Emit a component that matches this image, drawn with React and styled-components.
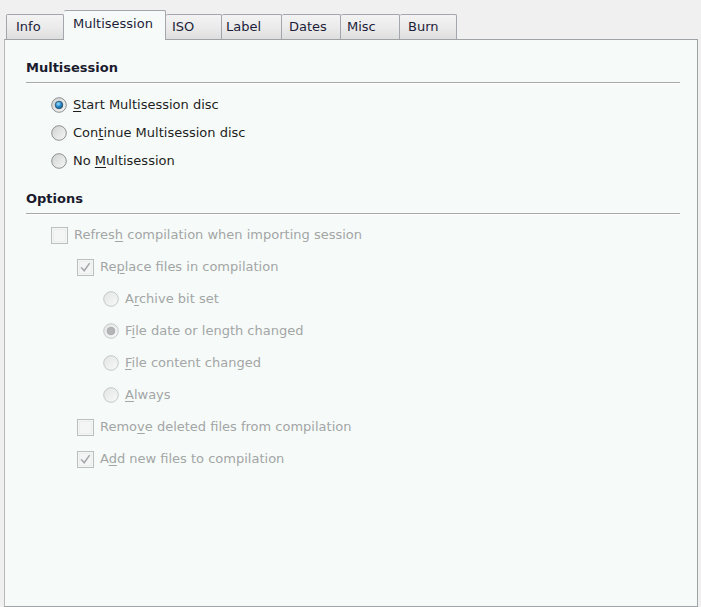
import React from 'react';
import styled, { createGlobalStyle } from 'styled-components';

const GlobalStyle = createGlobalStyle`
  html, body {
    margin: 0;
    padding: 0;
    background: #f0f0f0;
  }
  body {
    font-family: "DejaVu Sans", "Liberation Sans", sans-serif;
    font-size: 13px;
    color: #1e1e1e;
  }
`;

const Frame = styled.div`
  width: 701px;
  height: 607px;
  display: flex;
  flex-direction: column;
  box-sizing: border-box;
`;

const TabStrip = styled.div`
  height: 39px;
  display: flex;
  align-items: flex-end;
  padding-left: 6px;
`;

const Tab = styled.div`
  position: relative;
  box-sizing: border-box;
  width: ${(p) => p.$w}px;
  height: ${(p) => (p.$active ? 30 : 25)}px;
  margin-bottom: ${(p) => (p.$active ? -1 : 0)}px;
  padding-left: ${(p) => p.$pad}px;
  padding-top: ${(p) => (p.$active ? 5 : 4)}px;
  border: 1px solid #a3a6ab;
  border-bottom: none;
  border-left-width: ${(p) => (p.$first || p.$active ? 1 : 0)}px;
  border-radius: 2px 2px 0 0;
  background: ${(p) =>
    p.$active ? '#f6fbf9' : 'linear-gradient(#f3f3f3, #ebebeb 50%, #dedede)'};
  z-index: ${(p) => (p.$active ? 2 : 1)};
  color: #1e1e3a;
  white-space: nowrap;
  line-height: 16px;
  & + & {
    border-left-width: ${(p) => (p.$active ? 1 : 0)}px;
  }
`;

const Panel = styled.div`
  position: relative;
  z-index: 1;
  margin-left: 4px;
  width: 694px;
  height: 568px;
  box-sizing: border-box;
  border: 1px solid #a0a3a6;
  border-left-color: #b8b8b8;
  background: #f6fbf9;
  padding: 20px 17px 0 21px;
  display: flex;
  flex-direction: column;
`;

const SectionTitle = styled.div`
  font-weight: bold;
  font-size: 13px;
  line-height: 16px;
  color: #1a1a2e;
  padding-bottom: 6px;
  border-bottom: 1px solid #a8a8a8;
  box-shadow: 0 1px 0 #ffffff;
  margin-top: ${(p) => p.$top || 0}px;
`;

const OptionList = styled.div`
  display: flex;
  flex-direction: column;
  margin-top: ${(p) => p.$top}px;
`;

const Row = styled.div`
  height: ${(p) => p.$h}px;
  display: flex;
  align-items: center;
  gap: 6px;
  padding-left: ${(p) => 25 + p.$level * 26}px;
  color: ${(p) => (p.$disabled ? '#a3a5a6' : '#1e1e1e')};
  line-height: 16px;
`;

const Key = styled.span`
  text-decoration: underline;
  text-underline-offset: 2px;
`;

const Icon = styled.svg`
  flex: none;
  display: block;
`;

const RadioIcon = ({ checked, disabled }) => (
  <Icon width="16" height="16" viewBox="0 0 16 16">
    <defs>
      <linearGradient id={`rf${disabled ? 'd' : 'e'}`} x1="0" y1="0" x2="1" y2="1">
        <stop offset="0" stopColor={disabled ? '#e2e4e4' : '#cfd1d1'} />
        <stop offset="1" stopColor={disabled ? '#f8f9f9' : '#f7f7f7'} />
      </linearGradient>
      <radialGradient id="rdot" cx="0.4" cy="0.35" r="0.7">
        <stop offset="0" stopColor="#9fe0ff" />
        <stop offset="0.5" stopColor="#2a8fd0" />
        <stop offset="1" stopColor="#0d4f7e" />
      </radialGradient>
    </defs>
    <circle cx="8" cy="8" r="7.3" fill={`url(#rf${disabled ? 'd' : 'e'})`} stroke={disabled ? '#c6c8c9' : '#8e9092'} strokeWidth="1" />
    {checked && !disabled && (
      <circle cx="8" cy="8" r="3.8" fill="url(#rdot)" stroke="#2d4f6a" strokeWidth="0.8" />
    )}
    {checked && disabled && (
      <circle cx="8" cy="8" r="3.8" fill="#b3b5b6" stroke="#a3a5a6" strokeWidth="0.8" />
    )}
  </Icon>
);

const CheckIcon = ({ checked }) => (
  <Icon width="17" height="17" viewBox="0 0 17 17">
    <rect x="0.5" y="0.5" width="16" height="16" fill="#f4f6f6" stroke="#bcbfc0" />
    <rect x="2.5" y="2.5" width="12" height="12" fill="none" stroke="#eceeee" />
    {checked && (
      <path d="M4.5 8.8 L7.2 11.8 L12.3 4.6" fill="none" stroke="#a5a8a9" strokeWidth="1.6" strokeLinejoin="round" strokeLinecap="round" />
    )}
  </Icon>
);

const tabs = [
  { name: 'Info', w: 58, pad: 9 },
  { name: 'Multisession', w: 102, pad: 9, active: true },
  { name: 'ISO', w: 56, pad: 6 },
  { name: 'Label', w: 60, pad: 4 },
  { name: 'Dates', w: 59, pad: 7 },
  { name: 'Misc', w: 59, pad: 6 },
  { name: 'Burn', w: 57, pad: 8 },
];

const label = (before, key, after) => (
  <span>
    {before}
    <Key>{key}</Key>
    {after}
  </span>
);

const App = () => {
  return (
    <Frame>
      <GlobalStyle />
      <TabStrip>
        {tabs.map((t, i) => (
          <Tab key={t.name} $w={t.w} $pad={t.pad} $active={t.active} $first={i === 0}>
            {t.name}
          </Tab>
        ))}
      </TabStrip>
      <Panel>
        <SectionTitle>Multisession</SectionTitle>
        <OptionList $top={8}>
          <Row $h={28} $level={0}>
            <RadioIcon checked />
            {label('', 'S', 'tart Multisession disc')}
          </Row>
          <Row $h={28} $level={0}>
            <RadioIcon />
            {label('Con', 't', 'inue Multisession disc')}
          </Row>
          <Row $h={27} $level={0}>
            <RadioIcon />
            {label('No ', 'M', 'ultisession')}
          </Row>
        </OptionList>

        <SectionTitle $top={17}>Options</SectionTitle>
        <OptionList $top={5}>
          <Row $h={32} $level={0} $disabled>
            <CheckIcon />
            {label('Refres', 'h', ' compilation when importing session')}
          </Row>
          <Row $h={32} $level={1} $disabled>
            <CheckIcon checked />
            {label('Re', 'p', 'lace files in compilation')}
          </Row>
          <Row $h={32} $level={2} $disabled>
            <RadioIcon disabled />
            {label('A', 'r', 'chive bit set')}
          </Row>
          <Row $h={32} $level={2} $disabled>
            <RadioIcon disabled checked />
            {label('F', 'i', 'le date or length changed')}
          </Row>
          <Row $h={32} $level={2} $disabled>
            <RadioIcon disabled />
            {label('', 'F', 'ile content changed')}
          </Row>
          <Row $h={32} $level={2} $disabled>
            <RadioIcon disabled />
            {label('', 'A', 'lways')}
          </Row>
          <Row $h={32} $level={1} $disabled>
            <CheckIcon />
            {label('Remo', 'v', 'e deleted files from compilation')}
          </Row>
          <Row $h={32} $level={1} $disabled>
            <CheckIcon checked />
            {label('A', 'd', 'd new files to compilation')}
          </Row>
        </OptionList>
      </Panel>
    </Frame>
  );
};

export default App;
